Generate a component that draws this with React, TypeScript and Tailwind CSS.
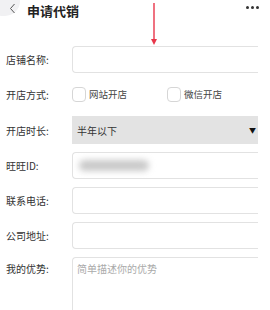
import React from "react";

const font = { fontFamily: '"Noto Sans CJK SC", "Noto Sans", sans-serif' };

function Row({ label, children, top }: { label: string; children: React.ReactNode; top?: boolean }) {
  return (
    <div className={`flex ${top ? "items-start" : "items-center"}`}>
      <div className={`w-[72px] shrink-0 pl-[6px] text-[10px] text-[#333] ${top ? "pt-[4px]" : ""}`}>{label}</div>
      <div className="flex-1 min-w-0">{children}</div>
    </div>
  );
}

function Input({ children }: { children?: React.ReactNode }) {
  return (
    <div className="relative h-[27px] rounded-l-[4px] border border-r-0 border-[#e2e2e2] bg-white overflow-hidden">
      {children}
    </div>
  );
}

function Check({ label }: { label: string }) {
  return (
    <div className="flex items-center gap-[3px]">
      <div className="w-[14px] h-[15px] rounded-[4px] border border-[#d6d6d6] bg-white" />
      <span className="text-[9.5px] text-[#444]">{label}</span>
    </div>
  );
}

export default function App() {
  return (
    <div className="relative w-[270px] h-[310px] bg-white overflow-hidden" style={font}>
      {/* header */}
      <div className="relative h-[20px] flex items-center">
        <div className="absolute left-[-12px] top-[-14px] w-[32px] h-[30px] rounded-full bg-[#f1f1f3]" />
        <svg className="absolute left-[9px] top-[3px]" width="7" height="11" viewBox="0 0 7 11">
          <path d="M5.5 1 L1.5 5.5 L5.5 10" fill="none" stroke="#555" strokeWidth="1" />
        </svg>
        <span className="ml-[27px] mt-[1px] text-[13px] font-bold text-[#222]">申请代销</span>
        <div className="ml-auto mr-[11px] mt-[-6px] flex gap-[2px]">
          <span className="w-[3px] h-[3px] rounded-full bg-[#333]" />
          <span className="w-[3px] h-[3px] rounded-full bg-[#333]" />
          <span className="w-[3px] h-[3px] rounded-full bg-[#333]" />
        </div>
      </div>

      {/* red arrow */}
      <svg className="absolute left-[150px] top-[3px]" width="8" height="43" viewBox="0 0 8 43">
        <line x1="4" y1="0" x2="4" y2="38" stroke="#e8364a" strokeWidth="1.4" />
        <path d="M1 36 L7 36 L4 42 Z" fill="#e8364a" />
      </svg>

      {/* form */}
      <div className="mt-[26px] pr-[12px] flex flex-col gap-[8px]">
        <Row label="店铺名称:">
          <Input />
        </Row>
        <Row label="开店方式:">
          <div className="h-[27px] flex items-center">
            <div className="w-[95px]"><Check label="网站开店" /></div>
            <Check label="微信开店" />
          </div>
        </Row>
        <Row label="开店时长:">
          <div className="h-[28px] bg-[#e3e3e3] flex items-center pl-[5px] pr-[2px]">
            <span className="text-[10px] text-[#333]">半年以下</span>
            <span className="ml-auto text-[7px] text-[#111] leading-none">▼</span>
          </div>
        </Row>
        <Row label="旺旺ID:">
          <Input>
            <div className="absolute left-[6px] top-[7px] w-[70px] h-[11px] rounded-full bg-[#c9c9c9] blur-[3px]" />
          </Input>
        </Row>
        <Row label="联系电话:">
          <Input />
        </Row>
        <Row label="公司地址:">
          <Input />
        </Row>
        <Row label="我的优势:" top>
          <div className="h-[70px] rounded-l-[4px] border border-r-0 border-[#e2e2e2] pl-[4px] pt-[3px] text-[10px] text-[#aaa]">
            简单描述你的优势
          </div>
        </Row>
      </div>
    </div>
  );
}
